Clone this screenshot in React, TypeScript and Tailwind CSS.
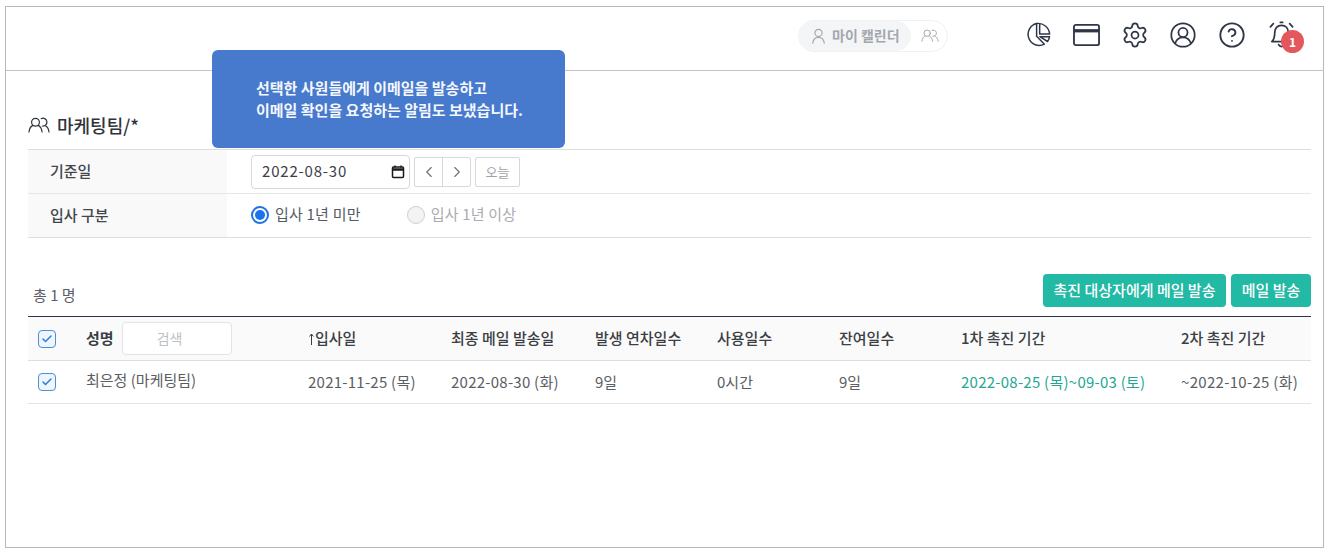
import React from "react";
import { Settings, CircleHelp, ChevronLeft, ChevronRight, Check } from "lucide-react";

const Users = ({ className = "", color = "currentColor" }: { className?: string; color?: string }) => (
  <svg viewBox="0 0 22 16" className={className} fill="none" stroke={color} strokeWidth="1.2" strokeLinecap="round">
    <circle cx="7.5" cy="5.2" r="3.9" />
    <path d="M1 15c.4-3.4 2.2-5.8 3.9-6.6M10.2 8.4c1.8.9 3.5 3.2 3.9 6.6" />
    <path d="M13.2 1.7a3.9 3.9 0 1 1 1.2 7.3" />
    <path d="M17 8.5c1.9.9 3.6 3.2 4 6.5" />
  </svg>
);

const Box = () => (
  <span className="flex h-[18px] w-[18px] items-center justify-center rounded-[4px] border border-[#4a90d9] bg-[#eef5fc]">
    <Check className="h-3 w-3 text-[#2f7fd0]" strokeWidth={3} />
  </span>
);

const Pie = () => (
  <svg viewBox="0 0 28 28" className="h-[26px] w-[26px]" fill="none" stroke="#2f3648" strokeWidth="1.6" strokeLinejoin="round">
    <path d="M12.5 1.6a12 12 0 1 0 8.4 22.3l-8.4-8.6z" />
    <path d="M12.5 1.6c7-.9 13.5 4.2 14 11.4H15.8V1.6" />
    <path d="M16 15.8h10.4c-.2 2-.9 3.6-2.1 5.2z" />
  </svg>
);

const Card = () => (
  <svg viewBox="0 0 28 24" className="h-[24px] w-[27px]" fill="none" stroke="#2f3648" strokeWidth="1.9">
    <rect x="1" y="1.5" width="26" height="21" rx="2" />
    <path d="M1 7.6h26" strokeWidth="3.4" />
  </svg>
);

const Account = () => (
  <svg viewBox="0 0 28 28" className="h-[26px] w-[26px]" fill="none" stroke="#2f3648" strokeWidth="1.9">
    <circle cx="14" cy="14" r="12.6" />
    <circle cx="14" cy="11.3" r="4.9" />
    <path d="M5.5 23.2c1.2-4 4.4-6.6 8.5-6.6s7.3 2.6 8.5 6.6" />
  </svg>
);

const Bell = () => (
  <svg viewBox="0 0 28 28" className="h-[27px] w-[27px]" fill="none" stroke="#2f3648" strokeWidth="1.8" strokeLinecap="round" strokeLinejoin="round">
    <path d="M14 4.5c-4.4 0-7 3.2-7 7.3 0 5.5-1 7.6-3 9.6h20c-2-2-3-4.1-3-9.6 0-4.1-2.6-7.3-7-7.3z" />
    <path d="M11 24.5c.7 1.4 1.7 2 3 2s2.3-.6 3-2" />
    <path d="M12.8 1.5h2.4M5.5 2.8 2.5 6M22.5 2.8l3 3.2" />
  </svg>
);

const cols = "grid grid-cols-[58px_222px_143px_144px_122px_122px_122px_220px_130px]";

const Radio = ({ on, label }: { on?: boolean; label: string }) => (
  <span className="flex items-center gap-[6px]">
    {on ? (
      <span className="flex h-[18px] w-[18px] items-center justify-center rounded-full border-2 border-[#1a73e8] bg-white">
        <span className="h-[10px] w-[10px] rounded-full bg-[#1a73e8]" />
      </span>
    ) : (
      <span className="h-[18px] w-[18px] rounded-full border border-[#cfcfcf] bg-[#f3f3f3]" />
    )}
    <span className={on ? "tracking-[0.2px] text-[#555b63]" : "tracking-[0.2px] text-[#a9abaf]"}>{label}</span>
  </span>
);

export default function App() {
  return (
    <div
      className="h-[552px] w-[1327px] overflow-hidden bg-white pb-[4px] pl-[5px] pr-[3px] pt-[6px] text-[15px] text-[#50555c]"
      style={{ fontFamily: '"Noto Sans CJK KR", "Noto Sans", sans-serif' }}
    >
      <div className="relative h-full border-[1.5px] border-[#b8b8b8] bg-white">
        {/* top bar */}
        <header className="flex h-[64px] items-center border-b border-[#c4c4c4] pb-[8px]">
          <div className="ml-[792px] mt-[2px] flex h-[32px] w-[150px] items-center rounded-full border border-[#f0f1f3]">
            <div className="flex h-full w-[112px] items-center gap-[6px] rounded-full bg-[#f4f5f7] pl-[12px] text-[14px] font-bold text-[#a3a7ad]">
              <svg viewBox="0 0 16 18" className="h-[16px] w-[15px] shrink-0" fill="none" stroke="#a3a7ad" strokeWidth="1.3" strokeLinecap="round">
                <circle cx="8" cy="5.5" r="4" />
                <path d="M1.5 17c.5-3.8 3.2-6.5 6.5-6.5s6 2.7 6.5 6.5" />
              </svg>
              <span className="whitespace-nowrap">마이 캘린더</span>
            </div>
            <Users className="ml-[10px] h-[13px] w-[18px]" color="#a3a7ad" />
          </div>
          <div className="ml-[77px] flex h-[28px] items-center text-[#2f3648]">
            <span className="flex w-[48px] justify-start"><Pie /></span>
            <span className="flex w-[48px] justify-start"><Card /></span>
            <span className="flex w-[49px] justify-start"><Settings className="h-[28px] w-[28px]" strokeWidth={1.5} /></span>
            <span className="flex w-[48px] justify-start"><Account /></span>
            <span className="flex w-[50px] justify-start"><CircleHelp className="h-[28px] w-[28px]" strokeWidth={1.6} /></span>
            <span className="relative flex w-[40px] justify-start">
              <Bell />
              <span className="absolute left-[13px] top-[9px] flex h-[23px] w-[23px] items-center justify-center rounded-full bg-[#e2585c] text-[12px] font-bold leading-none text-white">1</span>
            </span>
          </div>
        </header>

        {/* toast */}
        <div className="absolute left-[206px] top-[43px] z-10 flex h-[98px] w-[353px] flex-col justify-center rounded-[6px] bg-[#4779cd] pl-[44px] text-[15px] font-bold leading-[22px] text-[#f4f7fc]">
          <p>선택한 사원들에게 이메일을 발송하고</p>
          <p>이메일 확인을 요청하는 알림도 보냈습니다.</p>
        </div>

        <div className="pl-[22px] pr-[12px]">
          <h1 className="mt-[40px] flex h-[28px] items-center gap-[7px] text-[18px] font-medium text-[#30343a]">
            <Users className="h-[16px] w-[22px]" color="#30343a" />
            <span>마케팅팀/*</span>
          </h1>
          <div className="mt-[10px] border-y border-[#dcdee0]">
            <div className="flex h-[44px] border-b border-[#e6e7e9]">
              <div className="flex w-[199px] items-center bg-[#f9f9f9] pl-[22px] font-medium text-[#43474d]">기준일</div>
              <div className="flex items-center pl-[24px]">
                <div className="flex h-[34px] w-[159px] items-center justify-between rounded-[4px] border border-[#d5d7da] bg-white pl-[10px] pr-[4px] tracking-[0.8px] text-[#3c4046]">
                  <span>2022-08-30</span>
                  <svg viewBox="0 0 14 14" className="h-[14px] w-[14px]" fill="none" stroke="#1a1a1a" strokeWidth="1.5">
                    <rect x="1.5" y="2" width="11" height="10.5" rx="1" />
                    <path d="M1.5 4.5h11" strokeWidth="2.5" />
                    <path d="M4 .5v2M10 .5v2" />
                  </svg>
                </div>
                <div className="ml-[4px] flex h-[30px] w-[57px] rounded-[2px] border border-[#d5d7da]">
                  <span className="flex flex-1 items-center justify-center border-r border-[#d5d7da]"><ChevronLeft className="h-[18px] w-[18px] text-[#6d7177]" strokeWidth={1.5} /></span>
                  <span className="flex flex-1 items-center justify-center"><ChevronRight className="h-[18px] w-[18px] text-[#6d7177]" strokeWidth={1.5} /></span>
                </div>
                <div className="ml-[4px] flex h-[30px] w-[45px] items-center justify-center rounded-[2px] border border-[#d5d7da] text-[13px] text-[#9fa2a6]">오늘</div>
              </div>
            </div>
            <div className="flex h-[43px]">
              <div className="flex w-[199px] items-center bg-[#f9f9f9] pl-[22px] font-medium text-[#43474d]">입사 구분</div>
              <div className="flex items-center gap-[46px] pb-[2px] pl-[24px]">
                <Radio on label="입사 1년 미만" />
                <Radio label="입사 1년 이상" />
              </div>
            </div>
          </div>

          <div className="mt-[36px] flex h-[33px] items-center justify-between">
            <span className="pl-[5px] pt-[10px] text-[#5d6167]">총 1 명</span>
            <div className="flex gap-[5px] font-medium text-white">
              <button className="h-[33px] w-[183px] rounded-[4px] bg-[#22b9a5]">촉진 대상자에게 메일 발송</button>
              <button className="h-[33px] w-[80px] rounded-[4px] bg-[#22b9a5]">메일 발송</button>
            </div>
          </div>

          <div className={`${cols} mt-[9px] h-[45px] items-center border-y border-b-[#dcdee0] border-t-[#2f3648] bg-[#fafafa] font-medium text-[#3b3f45]`}>
            <span className="pl-[10px]"><Box /></span>
            <span className="flex items-center gap-[8px]">
              <span className="font-bold">성명</span>
              <span className="flex h-[33px] w-[110px] items-center justify-center rounded-[4px] border border-[#e1e3e5] bg-white pr-[14px] text-[14px] font-normal text-[#bcbfc3]">검색</span>
            </span>
            <span className="flex items-center gap-[1px]">
              <svg viewBox="0 0 5 12" className="ml-[1px] h-[12px] w-[5px]" fill="none" stroke="#3b3f45" strokeWidth="1">
                <path d="M2.5 12V1M.5 3.5l2-2.5 2 2.5" />
              </svg>
              <span>입사일</span>
            </span>
            <span>최종 메일 발송일</span>
            <span>발생 연차일수</span>
            <span>사용일수</span>
            <span>잔여일수</span>
            <span>1차 촉진 기간</span>
            <span>2차 촉진 기간</span>
          </div>
          <div className={`${cols} h-[43px] items-center border-b border-[#e3e4e6] text-[#5a5e64]`}>
            <span className="-mt-[1px] pl-[10px]"><Box /></span>
            <span className="-mt-[3px]">최은정 (마케팅팀)</span>
            <span className="tracking-[0.25px]">2021-11-25 (목)</span>
            <span className="tracking-[0.25px]">2022-08-30 (화)</span>
            <span>9일</span>
            <span>0시간</span>
            <span>9일</span>
            <span className="whitespace-nowrap tracking-[0.25px] text-[#1fa793]">2022-08-25 (목)~09-03 (토)</span>
            <span className="whitespace-nowrap tracking-[0.3px]">~2022-10-25 (화)</span>
          </div>
        </div>
      </div>
    </div>
  );
}
